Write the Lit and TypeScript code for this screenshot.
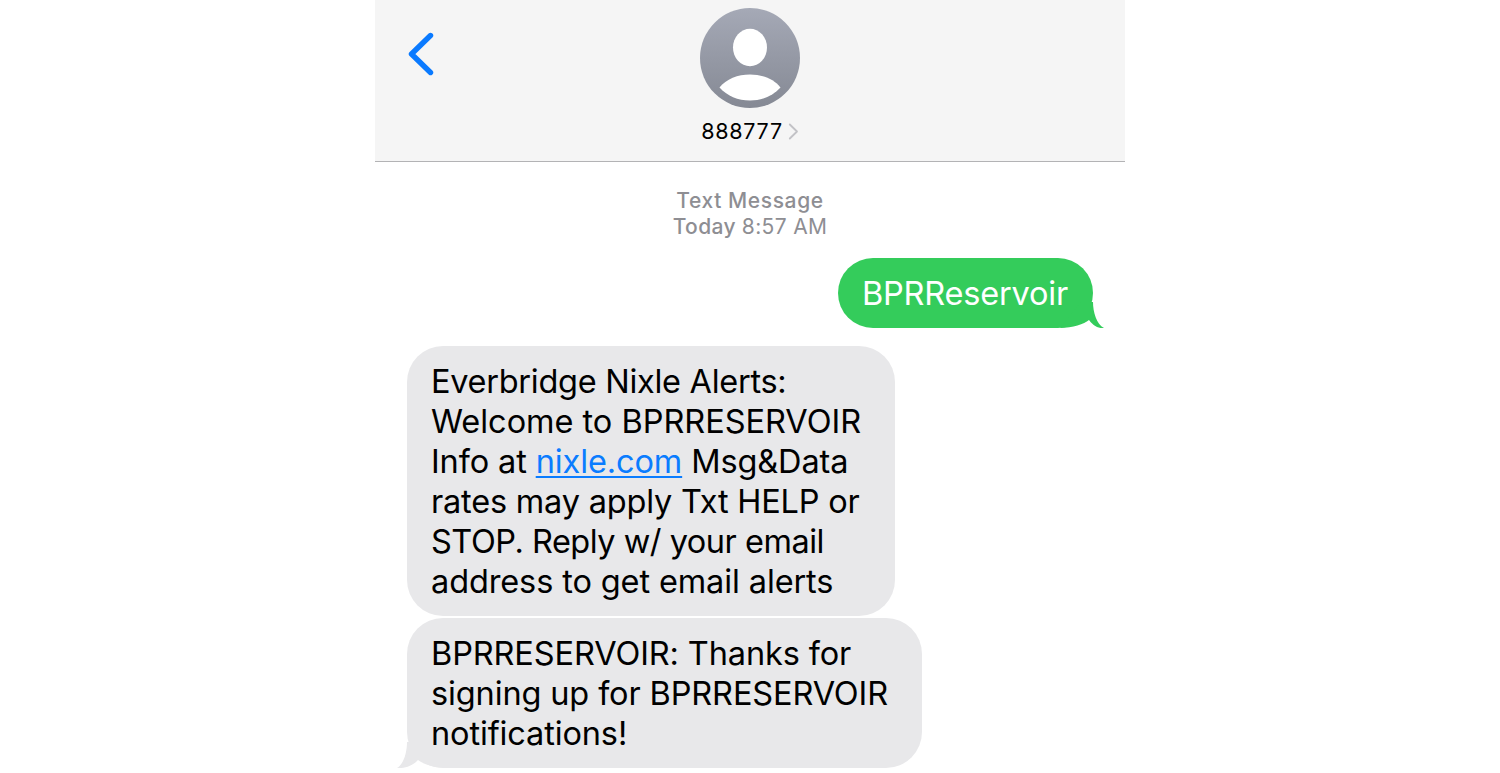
import { LitElement, html, css } from "lit";
import { customElement } from "lit/decorators.js";

const FIRST = [
  { text: "Everbridge Nixle Alerts:", spacing: -0.28 },
  { text: "Welcome to BPRRESERVOIR", spacing: -0.03 },
  { text: "", spacing: -0.12 },
  { text: "rates may apply Txt HELP or", spacing: -0.2 },
  { text: "STOP. Reply w/ your email", spacing: -0.49 },
  { text: "address to get email alerts", spacing: -0.12 },
];

const SECOND = [
  { text: "BPRRESERVOIR: Thanks for", spacing: -0.12 },
  { text: "signing up for BPRRESERVOIR", spacing: -0.13 },
  { text: "notifications!", spacing: -0.13 },
];

@customElement("app-root")
export class AppRoot extends LitElement {
  static styles = css`
    :host { display: block; height: 773px; overflow: hidden; background: #fff; font-family: Inter, "Liberation Sans", sans-serif; }
    .phone { width: 750px; margin: 0 auto; display: flex; flex-direction: column; }
    .header { position: relative; background: #f5f5f5; border-bottom: 1px solid #b3b3b5; display: flex; flex-direction: column; align-items: center; padding-top: 8px; height: 153px; }
    .back { position: absolute; left: 32px; top: 32px; width: 28px; height: 44px; }
    .avatar { width: 100px; height: 100px; display: block; }
    .name { display: flex; align-items: center; gap: 5px; margin-top: 10px; font-size: 21.5px; line-height: 26px; letter-spacing: 0.75px; color: #000; }
    .name svg { width: 11px; height: 17px; display: block; }
    .stamp { margin-top: 26px; text-align: center; color: #8e8e93; font-size: 21px; line-height: 26px; font-weight: 500; letter-spacing: 0.2px; }
    .stamp .label { letter-spacing: 0.6px; }
    .stamp .today { letter-spacing: 0.35px; }
    .stamp .time { font-weight: 400; }
    .sent-row { display: flex; justify-content: flex-end; padding-right: 32px; margin-top: 18px; }
    .bubble { position: relative; box-sizing: border-box; font-size: 32.5px; line-height: 40px; letter-spacing: -0.2px; white-space: nowrap; }
    .line { display: block; }
    .sent { width: 255px; height: 70px; border-radius: 35px; background: #34cc5b; color: #fff; padding: 16px 0 0 24px; }
    .tail { position: absolute; display: block; overflow: visible; }
    .sent .tail { right: -12px; bottom: 0; width: 24px; height: 26px; }
    .received-col { display: flex; flex-direction: column; align-items: flex-start; gap: 2px; padding-left: 32px; margin-top: 18px; }
    .received { background: #e8e8ea; color: #000; border-radius: 36px; padding: 16px 0 0 24px; }
    .r1 { width: 488px; height: 270px; }
    .r2 { width: 515px; height: 150px; }
    .received .tail { left: -11px; bottom: 0; width: 24px; height: 26px; }
    a { color: #0a7cff; text-decoration: underline; text-decoration-thickness: 2px; text-underline-offset: 3px; }
  `;

  private line(text: unknown, spacing: number) {
    return html`<span class="line" style="letter-spacing:${spacing}px">${text}</span>`;
  }

  render() {
    return html`
      <div class="phone">
        <div class="header">
          <svg class="back" viewBox="0 0 28 44" fill="none" stroke="#0a7aff" stroke-width="5.400" stroke-linecap="round" stroke-linejoin="round">
            <path d="M23.500 3.500 L4.500 22 L23.500 40.500" />
          </svg>
          <svg class="avatar" viewBox="0 0 100 100">
            <defs>
              <linearGradient id="av" x1="0" y1="0" x2="0" y2="1">
                <stop offset="0" stop-color="#a5a9b6" />
                <stop offset="1" stop-color="#858994" />
              </linearGradient>
            </defs>
            <circle cx="50" cy="50" r="50" fill="url(#av)" />
            <ellipse cx="50" cy="39.500" rx="17" ry="18.700" fill="#fff" />
            <path d="M19.500 79.500 C26 71 38 66.500 50 66.500 C62 66.500 74 71 80.500 79.500 C73 88 62 92.500 50 92.500 C38 92.500 27 88 19.500 79.500 Z" fill="#fff" />
          </svg>
          <div class="name">
            <span>888777</span>
            <svg viewBox="0 0 11 17" fill="none" stroke="#c2c2c6" stroke-width="1.8" stroke-linecap="round" stroke-linejoin="round"><path d="M1.800 1.500 L9 8.500 L1.800 15.500" /></svg>
          </div>
        </div>
        <div class="stamp">
          <div class="label">Text Message</div>
          <div class="today">Today <span class="time">8:57 AM</span></div>
        </div>
        <div class="sent-row">
          <div class="bubble sent">
            BPRReservoir
            <svg class="tail" viewBox="0 0 24 26"><path d="M0 0 L12 0 C12 10 15.500 22 23 26 C17 26.500 12.500 24 8 18 C3 22 -8 26 -21 26 Z" fill="#34cc5b" /></svg>
          </div>
        </div>
        <div class="received-col">
          <div class="bubble received r1">
            ${FIRST.map((l, i) =>
              i === 2
                ? this.line(html`Info at <a>nixle.com</a> Msg&amp;Data`, l.spacing)
                : this.line(l.text, l.spacing)
            )}
          </div>
          <div class="bubble received r2">
            ${SECOND.map((l) => this.line(l.text, l.spacing))}
            <svg class="tail" viewBox="0 0 24 26"><path d="M24 0 L11 0 C11 10 8 22 1 26 C8 26.500 16 24.500 22 18 C27 22 38 26 51 26 Z" fill="#e8e8ea" /></svg>
          </div>
        </div>
      </div>
    `;
  }
}
